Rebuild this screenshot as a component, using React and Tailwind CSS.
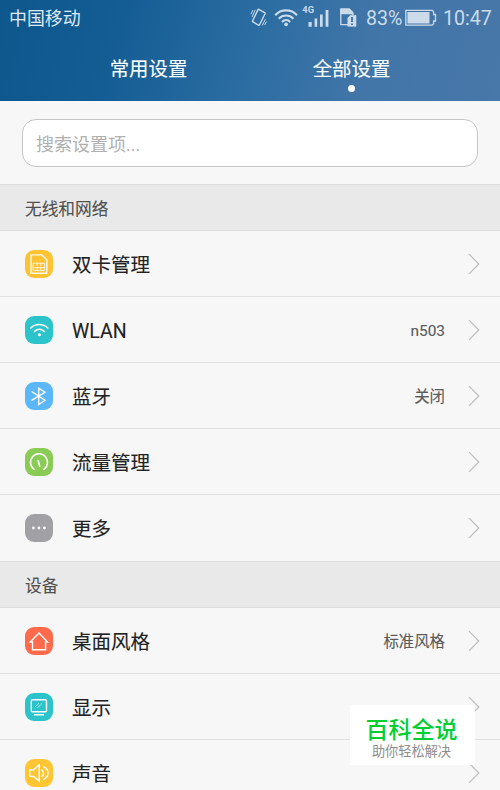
import React from "react";

const stroke = { fill: "none", stroke: "#fff", strokeWidth: 1.5, strokeLinejoin: "round", strokeLinecap: "round" };

const glyphs = {
  sim: (
    <g {...stroke} strokeOpacity="0.9" strokeLinejoin="miter">
      <path d="M6 4.9H16.8L21.8 9.7V23.3H6Z" strokeWidth="1.4" />
      <path d="M8.5 13.2H19.5V20.6H8.5Z M8.5 17.7H19.5 M12.2 17.7V20.6 M15.8 17.7V20.6 M12.2 13.2V15.7 M15.8 13.2V15.7" strokeWidth="0.9" />
    </g>
  ),
  wifi: (
    <g {...stroke}>
      <path d="M5.8 12C10.5 7.3 17.8 7.3 22.8 12" />
      <path d="M9.5 15.4C12.4 12.8 16.2 12.8 19.1 15.4" />
      <circle cx="14.4" cy="18.7" r="1.5" fill="#fff" stroke="none" />
    </g>
  ),
  bluetooth: (
    <path {...stroke} strokeWidth="1.35" strokeLinejoin="miter" d="M7 9.8L20 18.3L13.7 22.5V6.2L20 10.3L7 18.2" />
  ),
  gauge: (
    <g {...stroke} strokeWidth="1.5">
      <path d="M9.2 21.3A8.5 8.5 0 1 1 18.8 21.3" />
      <path d="M13.2 12.8L14.7 18.2" strokeWidth="1.6" />
    </g>
  ),
  more: (
    <g fill="#fff">
      <circle cx="8.4" cy="14" r="1.4" />
      <circle cx="13.9" cy="14" r="1.4" />
      <circle cx="19.4" cy="14" r="1.4" />
    </g>
  ),
  home: <path {...stroke} strokeWidth="1.4" strokeLinejoin="miter" d="M5.2 15L14 5.9L22.6 15H20.6V22.7H7.5V15Z" />,
  display: (
    <g {...stroke}>
      <rect x="6.3" y="6.7" width="15.2" height="12" rx="1" strokeWidth="1.4" />
      <path d="M9.9 14.2L13.7 10.5M12.8 14.5L16.8 10.6" strokeWidth="0.9" strokeDasharray="1.5 0.6" strokeLinecap="butt" />
      <path d="M8.8 21.8H19" strokeWidth="1.5" strokeLinecap="butt" />
    </g>
  ),
  sound: (
    <g {...stroke} strokeLinejoin="miter">
      <path d="M4.7 10.7H8.5L14.2 5.8V22L8.5 17.4H4.7Z" strokeWidth="1.4" />
      <path d="M16.7 10.8C19.2 12.3 19.2 16 16.7 17.5" strokeWidth="1.4" />
      <path d="M18.7 7.8C24.5 10.5 24.5 17.7 18.7 20.3" strokeWidth="1.4" />
    </g>
  ),
};

function Row({ icon, color, label, value, last }) {
  return (
    <div className={`flex h-[66px] shrink-0 items-center border-b pr-5 pl-[25px] ${last ? "border-transparent" : "border-[#e1e1e1]"}`}>
      <svg className={`size-7 shrink-0 rounded-[9px] ${color}`} viewBox="0 0 28 28">{glyphs[icon]}</svg>
      <span className="ml-[19px] flex-1 pt-1 text-[19.5px] leading-7 text-[#222] [-webkit-text-stroke:0.12px]">{label}</span>
      {value && <span className="pt-[3px] text-[15.4px] leading-6 text-[#5a5a5a] [-webkit-text-stroke:0.12px]">{value}</span>}
      <svg className="ml-[23px] h-[22px] w-3 shrink-0" viewBox="0 0 12 22" fill="none" stroke="#bdbdbd" strokeWidth="1.2">
        <path d="M1 1.2L10.8 11L1 20.8" />
      </svg>
    </div>
  );
}

function Section({ title }) {
  return (
    <div className="flex h-[47px] shrink-0 items-center border-y border-[#dedede] bg-[#e9e9e9] pl-[25px] text-[16.7px] text-[#505050] [-webkit-text-stroke:0.1px]">
      <span className="pt-[5px]">{title}</span>
    </div>
  );
}

function StatusBar() {
  return (
    <div className="flex h-9 items-center pr-[9px] pl-[9px] text-[#cbdbea]">
      <span className="flex-1 pt-0.5 text-[17.9px] leading-6 text-[#dfe9f1]">中国移动</span>
      <svg className="h-5 w-[17px]" viewBox="0 0 17 20" fill="none" stroke="currentColor" strokeWidth="1.4">
        <path d="M8.8 1.4L14.6 4.6Q15.3 5 15 5.7L9.6 16.7Q9.2 17.6 8.4 17.1L3 13.9Q2.3 13.5 2.6 12.8L7.9 1.9Q8.2 1.1 8.8 1.4Z" />
        <path d="M2 9L5.3 1.8M.9 6.2L2.9 2.1M12.3 17.4L15.4 11.3M14.7 17.1L16.4 13.6" strokeWidth="1" />
      </svg>
      <svg className="ml-[7px] h-5 w-6" viewBox="0 0 24 20" fill="none" stroke="currentColor" strokeWidth="2.1">
        <path d="M1.2 7.2C7 .8 17.2.8 23 7.2M4.7 10.7C8.8 6.5 15.4 6.5 19.5 10.7M8 14C10.4 11.4 13.8 11.4 16.2 14" />
        <circle cx="12.1" cy="16.3" r="1.9" fill="currentColor" stroke="none" />
      </svg>
      <svg className="ml-1 h-[26px] w-[28px]" viewBox="0 0 28 26" fill="currentColor">
        <text x="0.3" y="8.4" fontFamily="Roboto, sans-serif" fontSize="9.3" fontWeight="700">4G</text>
        <path d="M6.5 17H9.7V21.8H6.5ZM12.6 13.5H15.2V21.8H12.6ZM18 9.4H20.7V21.8H18ZM23.6 5H26.4V21.8H23.6Z" />
      </svg>
      <svg className="ml-[10px] h-5 w-[17px]" viewBox="0 0 17 20" fill="none" stroke="currentColor" strokeWidth="1.3">
        <path d="M8 16.6H.8V1.2H9.2L12.8 4.6V7" />
        <path d="M1 1.2H9.2L12.5 4.5V5.5H1Z" fill="currentColor" />
        <path d="M7.8 10L10.5 7.2H16V18.3H7.8Z" fill="currentColor" strokeWidth=".6" />
        <path d="M12 9V14M12 15.4V17" stroke="#376c9f" strokeWidth="1.7" />
      </svg>
      <span className="ml-[9px] w-[39px] pt-0.5 font-[Roboto] text-[19.6px] leading-6">83%</span>
      <svg className="h-[18px] w-8" viewBox="0 0 32 18">
        <path d="M.8 1.4H27.2L28.6 2.8V5.5H30.5V12H28.6V14.7L27.2 16.1H.8Z" fill="none" stroke="currentColor" strokeWidth="1.3" />
        <path d="M2.4 3H24.5V14.5H2.4Z" fill="currentColor" />
      </svg>
      <span className="ml-1.5 w-[48px] pt-0.5 font-[Roboto] text-[19.6px] leading-6">10:47</span>
    </div>
  );
}

export default function App() {
  return (
    <div className="relative flex h-[790px] w-[500px] flex-col overflow-hidden bg-[#f7f7f7] font-[Roboto,'Noto_Sans_CJK_SC',sans-serif]">
      <header className="h-[101px] shrink-0 bg-[linear-gradient(105deg,#0d578d_0%,#145d94_24%,#2b6da2_50%,#4175a8_72%,#4877a9_100%)]">
        <StatusBar />
        <nav className="flex pl-[47px] text-[19.4px] leading-7 text-white [-webkit-text-stroke:0.1px]">
          <div className="w-[203px] pt-5 text-center">常用设置</div>
          <div className="flex w-[203px] flex-col items-center pt-5">
            <span>全部设置</span>
            <i className="mt-px size-[7px] rounded-full bg-white" />
          </div>
        </nav>
      </header>
      <div className="h-[83px] shrink-0 px-[22px] pt-[18px]">
        <div className="flex h-12 items-center rounded-[14px] border border-[#c5c5c5] bg-white pt-[3px] pl-[13px] text-[18px] text-[#b0b0b0]">
          搜索设置项...
        </div>
      </div>
      <Section title="无线和网络" />
      <Row icon="sim" color="bg-[#ffc233]" label="双卡管理" />
      <Row icon="wifi" color="bg-[#2cc3cb]" label="WLAN" value="n503" />
      <Row icon="bluetooth" color="bg-[#5cb7f8]" label="蓝牙" value="关闭" />
      <Row icon="gauge" color="bg-[#89cb55]" label="流量管理" />
      <Row icon="more" color="bg-[#a0a0a5]" label="更多" last />
      <Section title="设备" />
      <Row icon="home" color="bg-[#ff6a4d]" label="桌面风格" value="标准风格" />
      <Row icon="display" color="bg-[#2cc3cb]" label="显示" />
      <Row icon="sound" color="bg-[#ffc533]" label="声音" />
      <div className="absolute top-[705px] left-[350px] flex h-[60px] w-[125px] flex-col items-center bg-white pr-0.5">
        <span className="mt-[10px] text-[23px] leading-8 font-medium text-[#00cf30]">百科全说</span>
        <span className="-mt-[5px] text-[13.2px] leading-5 text-[#8d8d8d]">助你轻松解决</span>
      </div>
    </div>
  );
}
